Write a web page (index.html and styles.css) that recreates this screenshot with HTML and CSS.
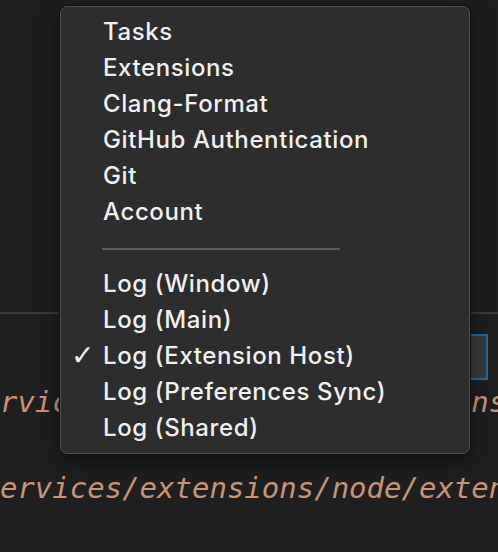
FILE: index.html
```html
<!DOCTYPE html>
<html>
<head>
<meta charset="utf-8">
<link rel="stylesheet" href="styles.css">
</head>
<body>
<div class="window">
  <div class="editor"></div>
  <div class="panel">
    <div class="panel-header">
      <div class="select"></div>
    </div>
    <div class="output">
      <div class="line">services/extensions/node/extensions.js</div>
      <div class="line"></div>
      <div class="line">/services/extensions/node/extensionHostProcess.js</div>
    </div>
  </div>
  <div class="menu">
    <div class="item">Tasks</div>
    <div class="item">Extensions</div>
    <div class="item">Clang-Format</div>
    <div class="item">GitHub Authentication</div>
    <div class="item">Git</div>
    <div class="item">Account</div>
    <div class="separator"><span></span></div>
    <div class="item">Log (Window)</div>
    <div class="item">Log (Main)</div>
    <div class="item checked"><span class="check">✓</span>Log (Extension Host)</div>
    <div class="item">Log (Preferences Sync)</div>
    <div class="item">Log (Shared)</div>
  </div>
</div>
</body>
</html>
```

FILE: styles.css
```css
html, body {
  margin: 0;
  padding: 0;
  background: #1e1e1e;
}

.window {
  position: relative;
  width: 498px;
  height: 552px;
  overflow: hidden;
  background: #1e1e1e;
}

.editor {
  height: 312px;
  background: #1e1e1e;
}

.panel {
  border-top: 2px solid #3a3a3a;
  background: #1f1f1f;
  height: 238px;
}

.panel-header {
  display: flex;
  justify-content: flex-end;
  padding: 20px 10px 0 0;
}

.select {
  width: 180px;
  height: 42px;
  border: 2px solid #1f6aa5;
  background: #3a3a3a;
}

.output {
  margin-left: -35px;
  padding-top: 1px;
}

.line {
  font-family: "DejaVu Sans Mono", monospace;
  font-style: italic;
  font-size: 29px;
  line-height: 43px;
  height: 43px;
  color: #c9927a;
  white-space: nowrap;
}

.menu {
  position: absolute;
  left: 60px;
  top: 6px;
  width: 410px;
  box-sizing: border-box;
  padding: 7px 0 7px 0;
  background: #2d2d2d;
  border: 1px solid #505050;
  border-radius: 7px;
  box-shadow: 0 0 0 1px #101010, 0 6px 20px rgba(0, 0, 0, 0.5);
}

.item {
  position: relative;
  height: 36px;
  line-height: 36px;
  padding-left: 42px;
  font-family: Inter, "Liberation Sans", sans-serif;
  font-size: 24px;
  font-weight: 500;
  letter-spacing: 0.6px;
  color: #f0f0f0;
  white-space: nowrap;
}

.check {
  position: absolute;
  left: 10px;
  top: 0;
  font-family: "DejaVu Sans", sans-serif;
  font-size: 28px;
  letter-spacing: 0;
}

.separator {
  height: 36px;
  display: flex;
  align-items: center;
  padding-left: 41px;
  box-sizing: border-box;
}

.separator span {
  display: block;
  width: 238px;
  height: 2px;
  background: #5a5a5a;
  margin-top: 2px;
}
```
